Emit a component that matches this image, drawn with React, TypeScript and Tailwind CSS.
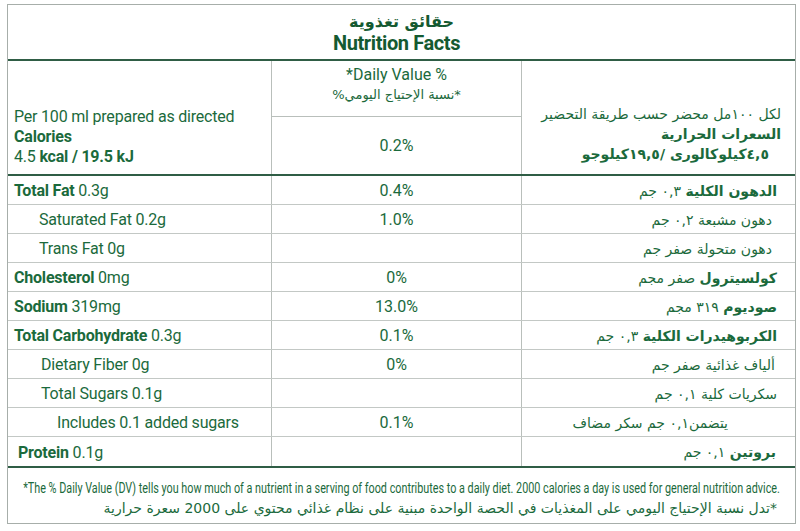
import React from 'react';

type Row = {
  en: React.ReactNode;
  enIndent: string;
  dv: string;
  ar: React.ReactNode;
  arIndent: string;
};

const rows: Row[] = [
  { en: <><b>Total Fat</b> 0.3g</>, enIndent: 'pl-[6px]', dv: '0.4%', ar: <><b>الدهون الكلية</b> ٠,٣ جم</>, arIndent: 'pr-[18px]' },
  { en: 'Saturated Fat 0.2g', enIndent: 'pl-[31px]', dv: '1.0%', ar: 'دهون مشبعة ٠,٢ جم', arIndent: 'pr-[23px]' },
  { en: 'Trans Fat 0g', enIndent: 'pl-[31px]', dv: '', ar: 'دهون متحولة صفر جم', arIndent: 'pr-[23px]' },
  { en: <><b>Cholesterol</b> 0mg</>, enIndent: 'pl-[6px]', dv: '0%', ar: <><b>كولسيترول</b> صفر مجم</>, arIndent: 'pr-[18px]' },
  { en: <><b>Sodium</b> 319mg</>, enIndent: 'pl-[6px]', dv: '13.0%', ar: <><b>صوديوم</b> ٣١٩ مجم</>, arIndent: 'pr-[18px]' },
  { en: <><b>Total Carbohydrate</b> 0.3g</>, enIndent: 'pl-[6px]', dv: '0.1%', ar: <><b>الكربوهيدرات الكلية</b> ٠,٣ جم</>, arIndent: 'pr-[18px]' },
  { en: 'Dietary Fiber 0g', enIndent: 'pl-[33px]', dv: '0%', ar: 'ألياف غذائية صفر جم', arIndent: 'pr-[20px]' },
  { en: 'Total Sugars 0.1g', enIndent: 'pl-[33px]', dv: '', ar: 'سكريات كلية ٠,١ جم', arIndent: 'pr-[18px]' },
  { en: 'Includes 0.1 added sugars', enIndent: 'pl-[49px]', dv: '0.1%', ar: 'يتضمن٠,١ جم سكر مضاف', arIndent: 'pr-[67px]' },
  { en: <><b>Protein</b> 0.1g</>, enIndent: 'pl-[10px]', dv: '', ar: <><b>بروتين</b> ٠,١ جم</>, arIndent: 'pr-[19px]' },
];

const ar = "font-['DejaVu_Sans',sans-serif]";

export default function App() {
  return (
    <div className="w-[800px] h-[531px] bg-white pt-[4px] pl-[7px]">
      <div className="w-[789px] border border-[#a7aeaa] text-[#1b6a3c] font-[Roboto,sans-serif]">
        <div className="h-[56px] flex flex-col items-center justify-center border-b-2 border-[#2f5d45]">
          <div dir="rtl" className={`${ar} font-bold text-[16px] leading-[21px] text-[#145a31]`}>حقائق تغذوية</div>
          <div className="font-bold text-[20px] leading-[22px] tracking-[-0.4px] text-[#145a31] pr-[10px]">Nutrition Facts</div>
        </div>

        <div className="grid grid-cols-[264px_250px_1fr] h-[115px] border-b-2 border-[#2f5d45]">
          <div className="flex flex-col justify-end pb-[7px] pl-[6px] border-r border-[#b9bfbb] text-[16px] leading-[20px] tracking-[-0.2px]">
            <div>Per 100 ml prepared as directed</div>
            <div className="font-bold">Calories</div>
            <div>4.5 <b>kcal / 19.5 kJ</b></div>
          </div>
          <div className="flex flex-col border-r border-[#b9bfbb]">
            <div className="h-[56px] flex flex-col items-center pt-[4px] border-b border-[#b9bfbb]">
              <div className="text-[16px] leading-[20px]">*Daily Value %</div>
              <div dir="rtl" className={`${ar} text-[13px] leading-[19px]`}>*نسبة الإحتياج اليومي%</div>
            </div>
            <div className="flex-1 flex items-center justify-center text-[16px]">0.2%</div>
          </div>
          <div dir="rtl" className={`${ar} flex flex-col justify-end pb-[10px] pr-[14px] text-[14px] leading-[20px]`}>
            <div>لكل ١٠٠مل محضر حسب طريقة التحضير</div>
            <div className="font-bold">السعرات الحرارية</div>
            <div className="font-bold pr-[12px]">٤,٥كيلوكالورى /١٩,٥كيلوجو</div>
          </div>
        </div>

        {rows.map((r, i) => (
          <div
            key={i}
            className={`grid grid-cols-[264px_250px_1fr] h-[29px] ${i < rows.length - 1 ? 'border-b border-[#c3c8c5]' : ''}`}
          >
            <div className={`flex items-center pt-[2px] border-r border-[#b9bfbb] text-[16px] tracking-[-0.2px] ${r.enIndent}`}>
              <span>{r.en}</span>
            </div>
            <div className="flex items-center justify-center pt-[2px] border-r border-[#b9bfbb] text-[16px]">{r.dv}</div>
            <div dir="rtl" className={`${ar} flex items-center pt-[2px] text-[14px] ${r.arIndent}`}>
              <span>{r.ar}</span>
            </div>
          </div>
        ))}

        <div className="h-[57px] border-t-2 border-[#2f5d45] flex flex-col justify-center pt-[5px] overflow-hidden">
          <div className="flex justify-center">
            <span className="inline-block whitespace-nowrap text-[15px] leading-[20px] scale-x-[0.72]">
              *The % Daily Value (DV) tells you how much of a nutrient in a serving of food contributes to a daily diet. 2000 calories a day is used for general nutrition advice.
            </span>
          </div>
          <div dir="rtl" className={`${ar} whitespace-nowrap text-[14px] leading-[20px] pr-[18px]`}>
            *تدل نسبة الإحتياج اليومي على المغذيات في الحصة الواحدة مبنية على نظام غذائي محتوي على 2000 سعرة حرارية
          </div>
        </div>
      </div>
    </div>
  );
}
